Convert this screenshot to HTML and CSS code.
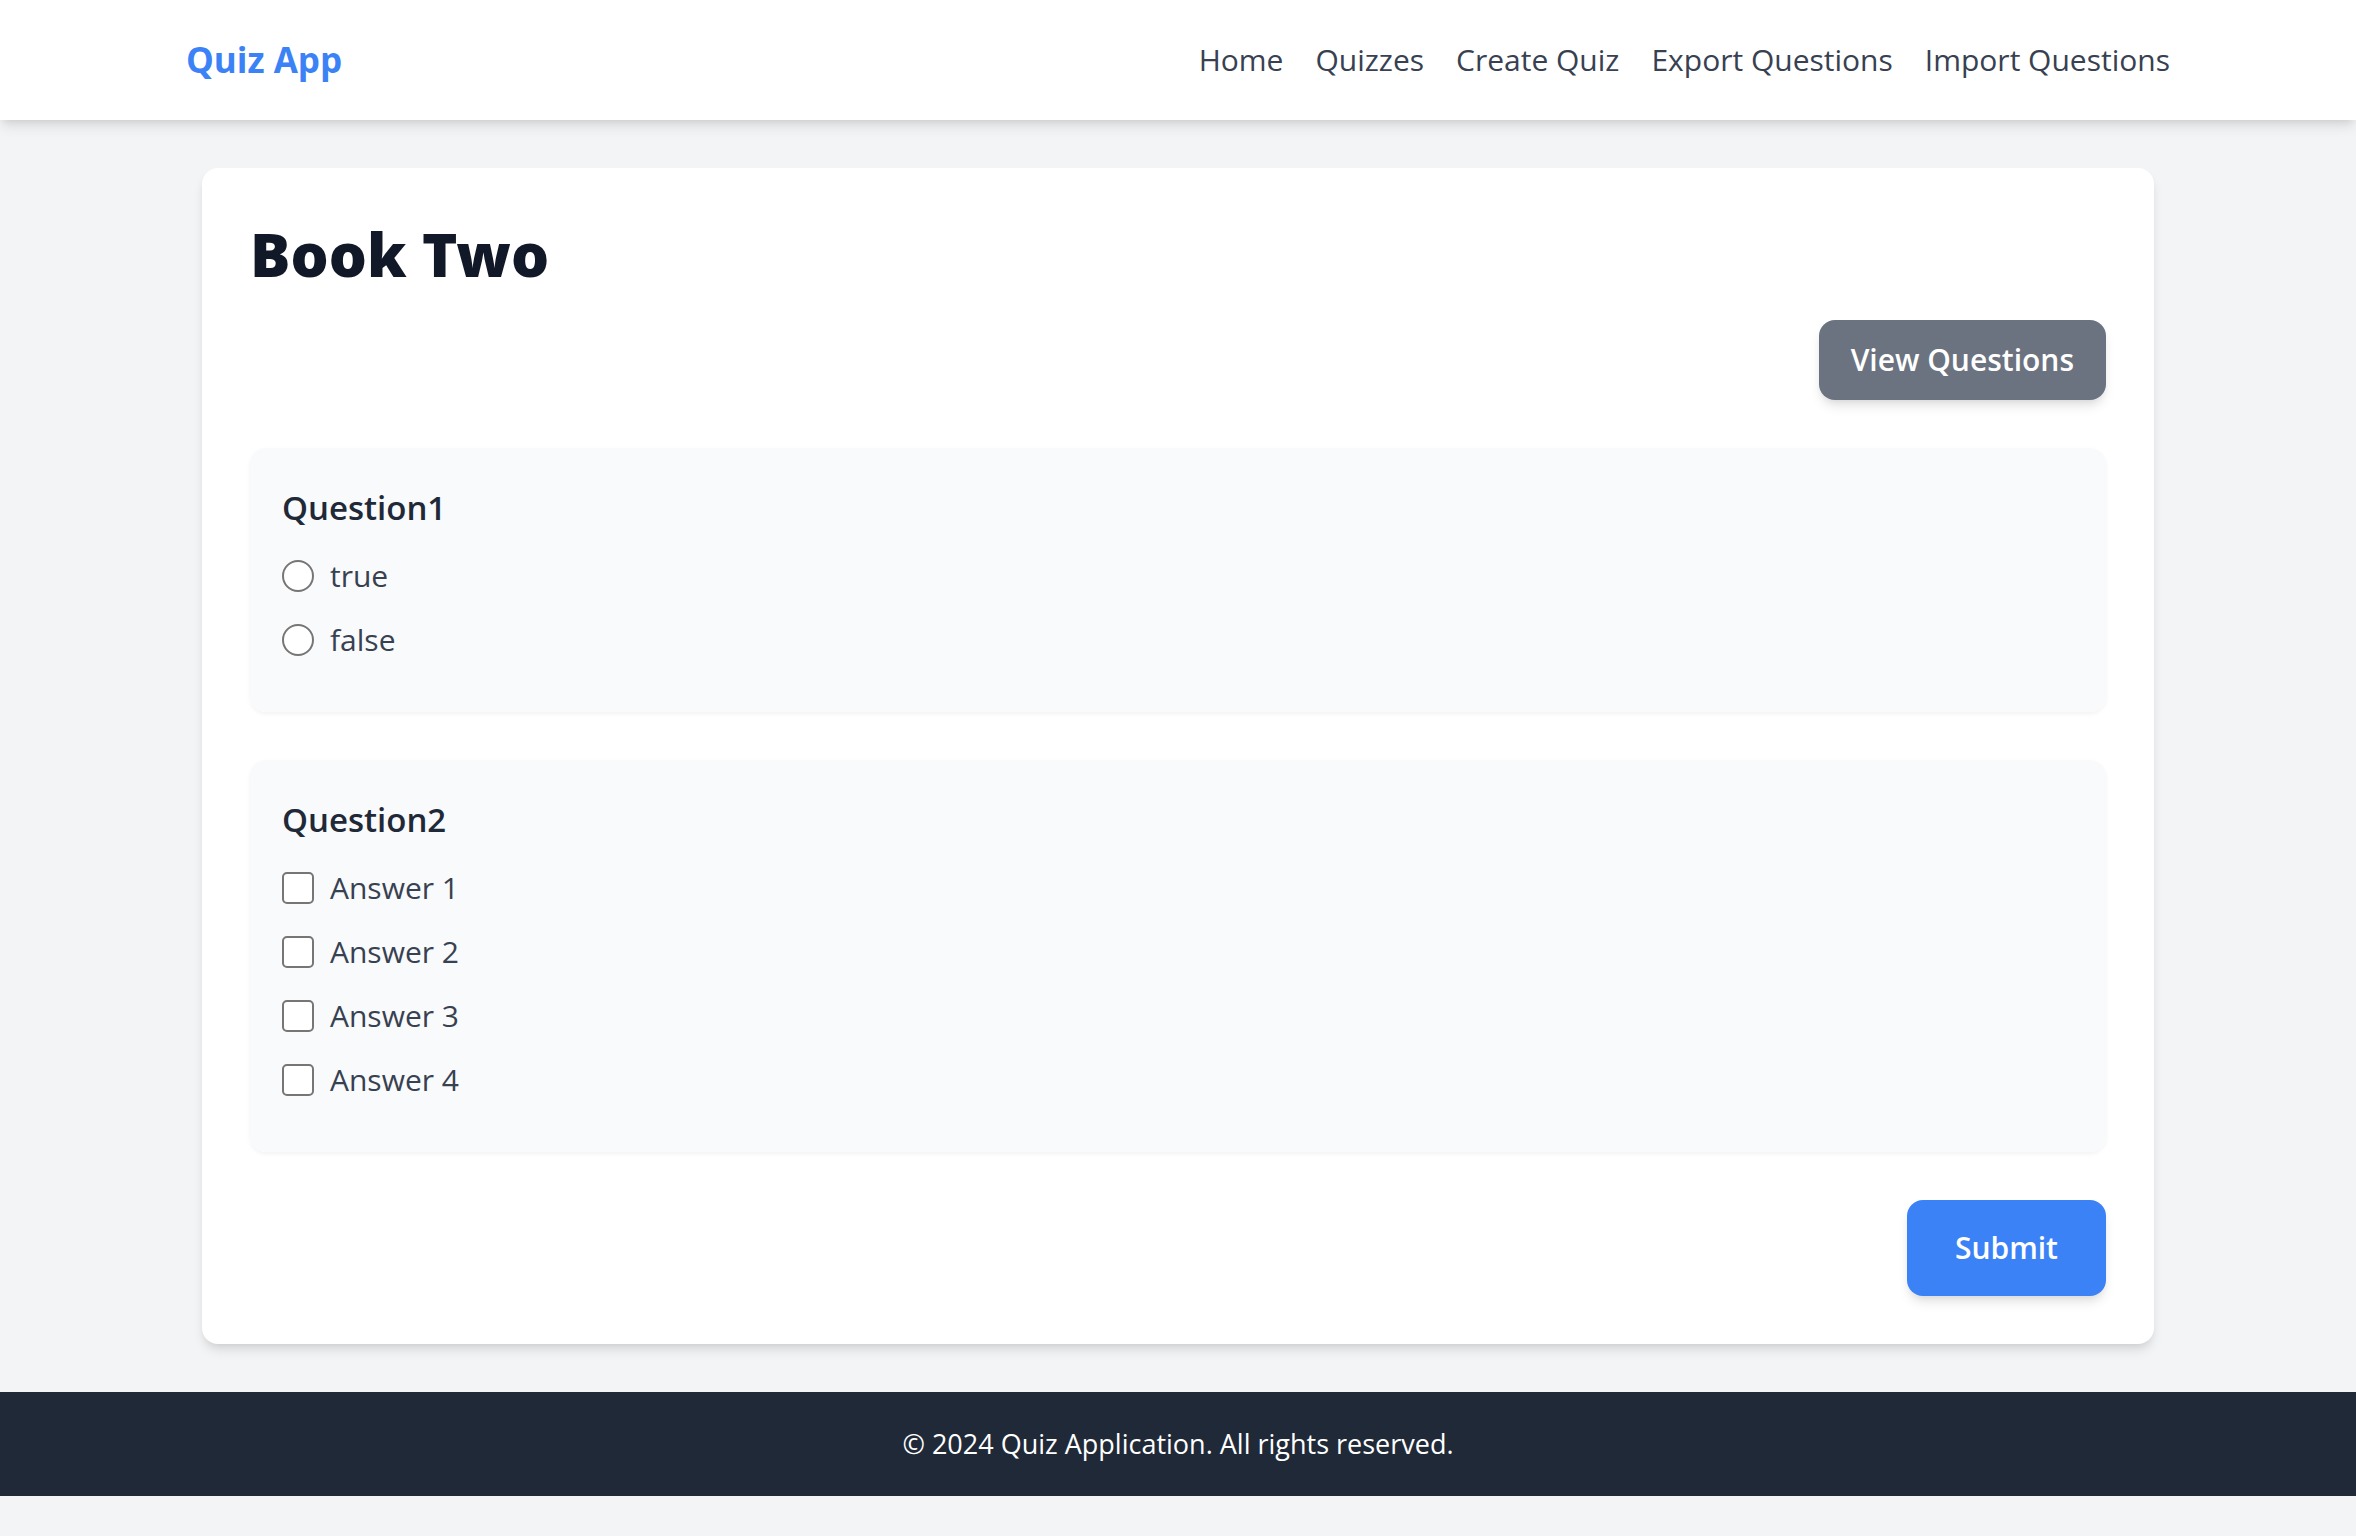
FILE: index.html
```html
<!DOCTYPE html>
<html lang="en">
<head>
  <meta charset="utf-8">
  <meta name="viewport" content="width=device-width, initial-scale=1">
  <title>Quiz App</title>
  <link rel="stylesheet" href="styles.css">
</head>
<body>
  <header class="site-header">
    <div class="header-inner">
      <a class="logo" href="#">Quiz App</a>
      <nav class="site-nav">
        <a href="#">Home</a>
        <a href="#">Quizzes</a>
        <a href="#">Create Quiz</a>
        <a href="#">Export Questions</a>
        <a href="#">Import Questions</a>
      </nav>
    </div>
  </header>

  <main class="page">
    <form class="card">
      <h1 class="title">Book Two</h1>
      <div class="actions">
        <button class="button button-secondary" type="button">View Questions</button>
      </div>

      <fieldset class="question" aria-labelledby="q1">
        <h2 class="question-title" id="q1">Question1</h2>
        <label class="option"><input class="choice choice-radio" type="radio" name="question1" value="true">true</label>
        <label class="option"><input class="choice choice-radio" type="radio" name="question1" value="false">false</label>
      </fieldset>

      <fieldset class="question" aria-labelledby="q2">
        <h2 class="question-title" id="q2">Question2</h2>
        <label class="option"><input class="choice" type="checkbox" name="question2" value="1">Answer 1</label>
        <label class="option"><input class="choice" type="checkbox" name="question2" value="2">Answer 2</label>
        <label class="option"><input class="choice" type="checkbox" name="question2" value="3">Answer 3</label>
        <label class="option"><input class="choice" type="checkbox" name="question2" value="4">Answer 4</label>
      </fieldset>

      <div class="actions">
        <button class="button button-primary" type="submit">Submit</button>
      </div>
    </form>
  </main>

  <footer class="site-footer">
    <p>© 2024 Quiz Application. All rights reserved.</p>
  </footer>
</body>
</html>
```
FILE: styles.css
```css
:root {
  --shadow: 0 8px 12px -2px rgb(0 0 0 / 10%), 0 4px 8px -4px rgb(0 0 0 / 10%);
}

*,
*::before,
*::after {
  box-sizing: border-box;
}

body {
  margin: 0;
  background: #f3f4f6;
  color: #374151;
  font-family: "Open Sans", "Noto Sans", sans-serif;
  font-size: 30px;
  line-height: 48px;
}

h1,
h2,
p {
  margin: 0;
}

a {
  color: inherit;
  text-decoration: none;
}

.site-header {
  background: #fff;
  box-shadow: var(--shadow);
}

.header-inner {
  display: flex;
  flex-wrap: wrap;
  align-items: center;
  justify-content: space-between;
  max-width: 2048px;
  margin: 0 auto;
  padding: 32px;
}

.logo {
  color: #3b82f6;
  font-size: 35px;
  font-weight: 700;
  line-height: 56px;
}

.site-nav {
  display: flex;
  flex-wrap: wrap;
  gap: 0 32px;
}

.page {
  max-width: 2048px;
  margin: 0 auto;
  padding: 48px;
}

.card {
  padding: 48px;
  border-radius: 16px;
  background: #fff;
  box-shadow: var(--shadow);
}

.title {
  margin-bottom: 28px;
  color: #111827;
  font-family: "Noto Sans", sans-serif;
  font-size: 60px;
  font-weight: 900;
  line-height: 76px;
}

.actions {
  display: flex;
  justify-content: flex-end;
}

.button {
  border: 0;
  border-radius: 16px;
  color: #fff;
  font: inherit;
  font-weight: 600;
  box-shadow: var(--shadow);
  cursor: pointer;
}

.button-secondary {
  padding: 16px 32px;
  background: #6b7280;
}

.button-primary {
  padding: 24px 48px;
  background: #3b82f6;
}

.question {
  display: flex;
  flex-direction: column;
  align-items: flex-start;
  gap: 16px;
  min-width: 0;
  margin: 48px 0;
  padding: 32px 32px 48px;
  border: 0;
  border-radius: 16px;
  background: #f9fafb;
  box-shadow: 0 2px 4px rgb(0 0 0 / 5%);
}

.question-title {
  color: #1f2937;
  font-size: 33px;
  font-weight: 600;
  line-height: 56px;
}

.option {
  display: flex;
  align-items: center;
  gap: 16px;
}

.choice {
  flex: none;
  appearance: none;
  width: 32px;
  height: 32px;
  margin: 0;
  border: 2px solid #767676;
  border-radius: 5px;
  background: #fff;
}

.choice-radio {
  border-radius: 50%;
}

.choice:checked {
  border-color: #3b82f6;
  background: #3b82f6;
  box-shadow: inset 0 0 0 5px #fff;
}

.site-footer {
  padding: 32px;
  background: #1f2937;
  color: #fff;
  font-size: 27px;
  line-height: 40px;
  text-align: center;
}
```
